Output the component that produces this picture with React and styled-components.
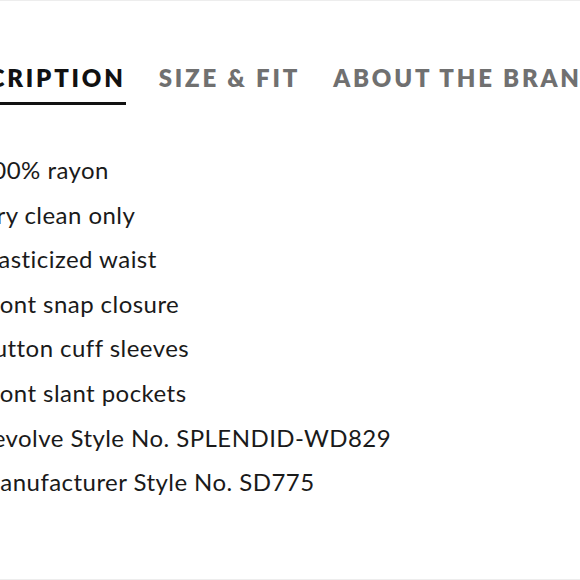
import React from 'react';
import styled, { createGlobalStyle } from 'styled-components';

const GlobalStyle = createGlobalStyle`
  body {
    margin: 0;
    background: #fff;
    font-family: Lato, "Liberation Sans", sans-serif;
  }
`;

const TABS = ['DESCRIPTION', 'SIZE & FIT', 'ABOUT THE BRAND'];

const DETAILS = [
  '100% rayon',
  'Dry clean only',
  'Elasticized waist',
  'Front snap closure',
  'Button cuff sleeves',
  'Front slant pockets',
  'Revolve Style No. SPLENDID-WD829',
  'Manufacturer Style No. SD775',
];

const App = () => {
  return (
    <Page>
      <GlobalStyle />
      {/* 탭 메뉴 */}
      <Tabs>
        {TABS.map((tab, idx) => (
          <Tab key={tab} active={idx === 0}>
            {tab}
          </Tab>
        ))}
      </Tabs>

      {/* 상품 상세 */}
      <DetailList>
        {DETAILS.map(item => (
          <li key={item}>{item}</li>
        ))}
      </DetailList>
    </Page>
  );
};

const Page = styled.div`
  width: 580px;
  height: 580px;
  box-sizing: border-box;
  border-top: 1px solid #ededed;
  border-bottom: 1px solid #ededed;
  overflow: hidden;
  padding-top: 63px;
`;

const Tabs = styled.div`
  display: flex;
  gap: 33px;
  margin-left: -65px;
  white-space: nowrap;
`;

const Tab = styled.div`
  font-size: 24px;
  line-height: 28px;
  font-weight: 800;
  letter-spacing: 2.8px;
  color: ${props => (props.active ? '#111' : '#707070')};
  padding-bottom: 10px;
  border-bottom: 3px solid ${props => (props.active ? '#111' : 'transparent')};
`;

const DetailList = styled.ul`
  list-style: none;
  margin: 43px 0 0 -22px;
  padding: 0;
  li {
    font-size: 24px;
    line-height: 44.6px;
    letter-spacing: 0.45px;
    color: #1a1a1a;
    white-space: nowrap;
  }
`;

export default App;
